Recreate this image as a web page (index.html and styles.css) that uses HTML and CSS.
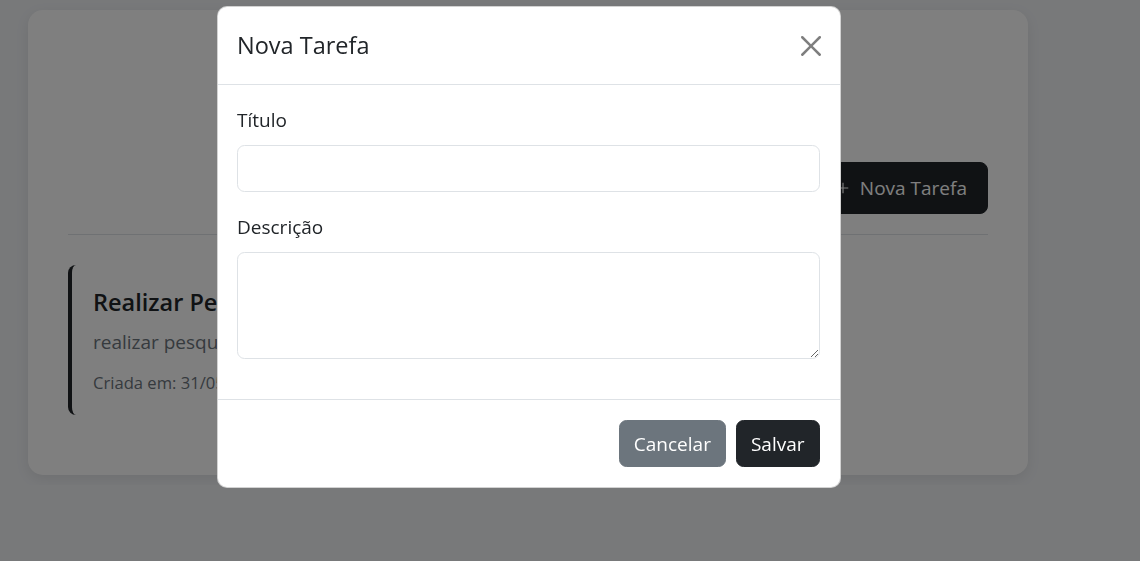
FILE: index.html
```html
<!DOCTYPE html>
<html lang="pt-BR">
<head>
<meta charset="utf-8">
<title>Tarefas</title>
<link rel="stylesheet" href="styles.css">
</head>
<body>
<div class="page">
  <main class="card">
    <header class="card-head">
      <h1 class="app-title">Gerenciador de Tarefas</h1>
      <p class="app-sub">Organize suas tarefas do dia a dia</p>
    </header>
    <div class="actions">
      <button class="btn btn-dark btn-new" type="button">
        <svg class="plus" viewBox="0 0 16 16" width="14" height="14" aria-hidden="true"><path d="M8 2v12M2 8h12" stroke="currentColor" stroke-width="1.3" fill="none"/></svg>
        <span>Nova Tarefa</span>
      </button>
    </div>
    <hr class="divider">
    <ul class="task-list">
      <li class="task">
        <h5 class="task-title">Realizar Pesquisa</h5>
        <p class="task-desc">realizar pesquisa sobre o projeto</p>
        <small class="task-date">Criada em: 31/05/2025 10:30</small>
      </li>
    </ul>
  </main>
</div>

<div class="backdrop"></div>
<div class="modal" role="dialog" aria-modal="true">
  <div class="modal-content">
    <div class="modal-header">
      <h5 class="modal-title">Nova Tarefa</h5>
      <button class="btn-close" type="button" aria-label="Fechar">
        <svg viewBox="0 0 16 16" width="20" height="20" aria-hidden="true"><path d="M.293.293a1 1 0 0 1 1.414 0L8 6.586 14.293.293a1 1 0 1 1 1.414 1.414L9.414 8l6.293 6.293a1 1 0 0 1-1.414 1.414L8 9.414l-6.293 6.293a1 1 0 0 1-1.414-1.414L6.586 8 .293 1.707a1 1 0 0 1 0-1.414z" fill="#000"/></svg>
      </button>
    </div>
    <form class="modal-body">
      <div class="field">
        <label class="form-label" for="titulo">Título</label>
        <input class="form-control" id="titulo" type="text">
      </div>
      <div class="field">
        <label class="form-label" for="descricao">Descrição</label>
        <textarea class="form-control textarea" id="descricao" rows="3"></textarea>
      </div>
    </form>
    <div class="modal-footer">
      <button class="btn btn-secondary" type="button">Cancelar</button>
      <button class="btn btn-dark" type="button">Salvar</button>
    </div>
  </div>
</div>
</body>
</html>
```

FILE: styles.css
```css
* { box-sizing: border-box; }

body {
  margin: 0;
  background: #f0f2f5;
  font-family: "Open Sans", "Noto Sans", sans-serif;
  font-size: 19px;
  line-height: 30px;
  color: #212529;
}

.page {
  padding: 10px 28px;
}

.card {
  width: 1000px;
  padding: 40px;
  background: #fff;
  border-radius: 15px;
  box-shadow: 0 4px 14px rgba(0, 0, 0, 0.08);
}

.card-head {
  text-align: center;
  margin-bottom: 24px;
}

.app-title {
  margin: 0;
  font-size: 34px;
  line-height: 48px;
  font-weight: 600;
}

.app-sub {
  margin: 10px 0 0;
  color: #6c757d;
}

.actions {
  display: flex;
  justify-content: flex-end;
}

.btn {
  display: inline-flex;
  align-items: center;
  font-family: inherit;
  font-size: 19px;
  line-height: 30px;
  color: #fff;
  border: 1px solid transparent;
  border-radius: 7.5px;
  padding: 7.5px 14px;
  cursor: pointer;
}

.btn-dark { background: #212529; border-color: #212529; }
.btn-secondary { background: #6c757d; border-color: #6c757d; }

.btn-new {
  padding: 10px 20px;
  gap: 10px;
  border-radius: 8px;
}

.plus { display: block; }

.divider {
  margin: 20px 0 30px;
  border: 0;
  border-top: 1px solid #dee2e6;
}

.task-list {
  list-style: none;
  margin: 0;
  padding: 0;
}

.task {
  display: flex;
  flex-direction: column;
  align-items: flex-start;
  margin-bottom: 20px;
  padding: 22px 20px 19px 21px;
  border-left: 4px solid #212529;
  border-radius: 8px;
  background: #fff;
}

.task-title {
  margin: 0 0 10px;
  font-size: 23.5px;
  line-height: 30px;
  font-weight: 600;
}

.task-desc {
  margin: 0 0 12px;
  color: #6c757d;
}

.task-date {
  font-size: 16.6px;
  line-height: 27px;
  color: #6c757d;
}

/* modal overlay */
.backdrop {
  position: fixed;
  inset: 0;
  background: rgba(0, 0, 0, 0.5);
}

.modal {
  position: fixed;
  top: 6px;
  left: 217px;
  width: 623.5px;
}

.modal-content {
  display: flex;
  flex-direction: column;
  background: #fff;
  border: 1px solid rgba(0, 0, 0, 0.175);
  border-radius: 10px;
}

.modal-header {
  display: flex;
  align-items: center;
  justify-content: space-between;
  padding: 20px 19px 20px 19px;
  border-bottom: 1px solid #dee2e6;
}

.modal-title {
  margin: 0;
  font-size: 23.5px;
  line-height: 37px;
  font-weight: 500;
}

.btn-close {
  display: flex;
  padding: 0;
  border: 0;
  background: transparent;
  opacity: 0.5;
  cursor: pointer;
}

.modal-body {
  display: flex;
  flex-direction: column;
  gap: 20px;
  padding: 20px 20px 40px 19px;
}

.field {
  display: flex;
  flex-direction: column;
}

.form-label {
  margin-bottom: 10px;
}

.form-control {
  display: block;
  width: 100%;
  height: 47px;
  padding: 7.5px 15px;
  font-family: inherit;
  font-size: 19px;
  line-height: 30px;
  color: #212529;
  background: #fff;
  border: 1px solid #dee2e6;
  border-radius: 7.5px;
}

.textarea {
  height: 107px;
  resize: vertical;
}

.modal-footer {
  display: flex;
  justify-content: flex-end;
  gap: 10px;
  padding: 20px;
  border-top: 1px solid #dee2e6;
}
```
